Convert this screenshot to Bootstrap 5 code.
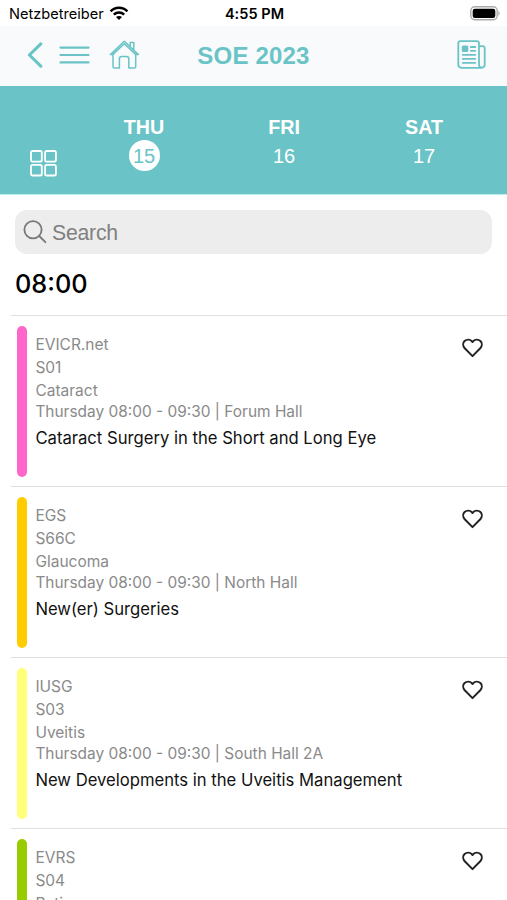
<!DOCTYPE html>
<html lang="en">
<head>
<meta charset="utf-8">
<meta name="viewport" content="width=device-width, initial-scale=1">
<title>SOE 2023</title>
<link href="https://cdn.jsdelivr.net/npm/bootstrap@5.3.0/dist/css/bootstrap.min.css" rel="stylesheet">
<style>
:root{--teal:#6ac4c7}
body{font-family:Inter,"Liberation Sans",sans-serif;color:#000;height:900px;overflow:hidden;background:#fff}
svg{display:block;flex:none}
.helv{font-family:"Liberation Sans",Arial,sans-serif}
.status{height:26px;font-size:14.6px;line-height:26px;padding:1px 7px 0 9px}
.status .side{flex:1 1 0}
.clock{font-weight:600;font-size:14.5px;letter-spacing:.05px}
.wifi{margin-left:5px}
.topbar{height:60px;background:#f8fafb;color:var(--teal);padding:0 21px 0 27px}
.topbar .side{flex:1 1 0;height:60px}
.topbar h1{font-size:24px;font-weight:700;line-height:60px;margin:0 6px 0 0;letter-spacing:.2px}
.icon-menu{margin-left:16px;margin-top:-2px}
.icon-back{margin-top:-2px}
.icon-home{margin-left:19px;margin-top:-3px}
.icon-news{margin-top:-3px}
.days{height:109px;background:var(--teal);color:#fff;border-bottom:1px solid #bdeaea;padding-right:13px}
.grid-btn{width:74px;padding:64px 0 0 30px}
.day{flex:1 1 0;padding-top:30px}
.day-name{font-size:19.7px;font-weight:700;line-height:23px}
.day-num{width:31px;height:31px;font-size:20px;line-height:32px;margin-top:1px}
.day-num.on{background:#fff;color:var(--teal);line-height:32px}
.search{margin:15px 15px 0;height:44px;border-radius:12px;background:#ededed;padding-left:8px;color:#808080;font-size:21.2px;line-height:44px}
.search-label{margin-left:5px;letter-spacing:-.2px;padding-top:1px}
.slot{font-size:25.3px;font-weight:500;line-height:30px;margin:0;padding:15px 15px 17px;height:61px}
.session{height:171px;margin-left:11px;border-top:1px solid #dfdfdf;padding:10px 24px 0 6px}
.track{width:10px;height:151px;border-radius:5px;flex:none}
.info{font-size:15.5px;line-height:23px;color:#8a8a8a;padding:6.5px 0 0 8.4px;white-space:nowrap}
.when{line-height:20px;font-size:15.45px}
.topic{font-size:16.65px;line-height:22px;margin:5px 0 0;color:#111;font-weight:400}
.fav{margin-top:12px}
.session:last-child{height:72px;overflow:hidden}
.pink{background:#ff66cc}.gold{background:#ffcc00}.lemon{background:#ffff7a}.lime{background:#99cc00}
</style>
<script src="https://cdn.jsdelivr.net/npm/bootstrap@5.3.0/dist/js/bootstrap.bundle.min.js"></script>
</head>
<body>
<svg width="0" height="0" class="position-absolute"><symbol id="heart" viewBox="0 0 20 19"><path d="M10 17.2 2.6 9.7C.7 7.6.7 4.6 2.5 2.9 4.5 1 7.6 1.1 9.3 3l.7.8.7-.8c1.7-1.9 4.8-2 6.8-.1 1.8 1.7 1.8 4.7-.1 6.8Z" fill="none" stroke="#222" stroke-width="1.9" stroke-linejoin="round"/></symbol></svg>

<div class="status d-flex align-items-center">
  <div class="side d-flex align-items-center"><span>Netzbetreiber</span>
    <svg class="wifi" width="20" height="15" viewBox="0 0 20 15" fill="none" stroke="#000" stroke-width="2.5"><path d="M1.6 5.3C6.3.6 13.7.6 18.4 5.3M4.8 8.7c2.9-2.8 7.5-2.8 10.4 0"/><path d="M10 14 7 11c1.7-1.5 4.3-1.5 6 0Z" fill="#000" stroke="none"/></svg>
  </div>
  <span class="clock">4:55 PM</span>
  <div class="side d-flex justify-content-end">
    <svg width="30" height="15" viewBox="0 0 30 15"><rect x=".8" y=".8" width="26.4" height="13" rx="4" fill="#fff" stroke="#aaa" stroke-width="1.4"/><rect x="2.7" y="2.7" width="22.6" height="9.2" rx="2.2"/><path d="M28.4 5v4.7c1.7-.8 1.7-3.9 0-4.7Z" fill="#aaa"/></svg>
  </div>
</div>

<nav class="topbar d-flex align-items-center">
  <div class="side d-flex align-items-center">
    <svg class="icon-back" width="16" height="26" viewBox="0 0 16 26" fill="none" stroke="currentColor" stroke-width="3.1" stroke-linecap="round" stroke-linejoin="round"><path d="M13.8 1.8 2.4 13l11.4 11.2"/></svg>
    <svg class="icon-menu" width="31" height="18" viewBox="0 0 31 18" stroke="currentColor" stroke-width="2.2" stroke-linecap="round"><path d="M1.5 1.6h28M1.5 9h28M1.5 16.4h28"/></svg>
    <svg class="icon-home" width="31" height="29" viewBox="0 0 31 29" fill="none" stroke="currentColor" stroke-width="1.5" stroke-linejoin="round" stroke-linecap="round"><path d="M4 14.8v11.9c0 .8.5 1.3 1.3 1.3h5.1v-9.2c0-1.5.8-2.3 2.3-2.3h4.8c1.5 0 2.3.8 2.3 2.3V28h5.6c.8 0 1.3-.5 1.3-1.3V14.8M1.4 14.6h2.4L15.3 3.7l11.6 10.9h2.5L15.3 1.2ZM21.2 6.2V2.6h3.6v7"/></svg>
  </div>
  <h1 class="helv">SOE 2023</h1>
  <div class="side d-flex align-items-center justify-content-end">
    <svg class="icon-news" width="29" height="29" viewBox="0 0 29 29" fill="none" stroke="currentColor" stroke-width="1.8" stroke-linecap="round" stroke-linejoin="round"><path d="M22 24.5V3.4Q22 1.2 19.8 1.2H3.5Q1.3 1.2 1.3 3.4v21.2q0 3.2 3.2 3.2h20q3.2 0 3.2-3.2V8.2q0-2-2-2H22M22 24.5q0 3.2 2.8 3.2"/><path d="M13.8 7h4.5M13.8 10.8h4.5M5.7 14.8h12.6M5.7 18.8h12.6M5.7 22.8h12.6"/><rect x="5.7" y="6.5" width="4.7" height="4.5" rx=".6" fill="currentColor"/></svg>
  </div>
</nav>

<div class="days helv d-flex">
  <div class="grid-btn"><svg width="27" height="27" viewBox="0 0 27 27" fill="none" stroke="#fff" stroke-width="1.8"><rect x="1" y="1" width="10.8" height="10.6" rx="1.6"/><rect x="15.1" y="1" width="10.8" height="10.6" rx="1.6"/><rect x="1" y="14.9" width="10.8" height="10.6" rx="1.6"/><rect x="15.1" y="14.9" width="10.8" height="10.6" rx="1.6"/></svg></div>
  <div class="day d-flex flex-column align-items-center"><div class="day-name">THU</div><div class="day-num on rounded-circle text-center">15</div></div>
  <div class="day d-flex flex-column align-items-center"><div class="day-name">FRI</div><div class="day-num text-center">16</div></div>
  <div class="day d-flex flex-column align-items-center"><div class="day-name">SAT</div><div class="day-num text-center">17</div></div>
</div>

<div class="search helv d-flex align-items-center">
  <svg width="24" height="24" viewBox="0 0 24 24" fill="none" stroke="#777" stroke-width="1.8" stroke-linecap="round"><circle cx="10" cy="9.8" r="8.6"/><path d="m16.2 16 6.2 6.2"/></svg>
  <span class="search-label">Search</span>
</div>

<h2 class="slot">08:00</h2>

<article class="session d-flex">
  <div class="track pink"></div>
  <div class="info flex-grow-1"><div>EVICR.net</div><div>S01</div><div>Cataract</div><div class="when">Thursday 08:00 - 09:30 | Forum Hall</div><h3 class="topic">Cataract Surgery in the Short and Long Eye</h3></div>
  <svg class="fav" width="21" height="20"><use href="#heart"/></svg>
</article>
<article class="session d-flex">
  <div class="track gold"></div>
  <div class="info flex-grow-1"><div>EGS</div><div>S66C</div><div>Glaucoma</div><div class="when">Thursday 08:00 - 09:30 | North Hall</div><h3 class="topic">New(er) Surgeries</h3></div>
  <svg class="fav" width="21" height="20"><use href="#heart"/></svg>
</article>
<article class="session d-flex">
  <div class="track lemon"></div>
  <div class="info flex-grow-1"><div>IUSG</div><div>S03</div><div>Uveitis</div><div class="when">Thursday 08:00 - 09:30 | South Hall 2A</div><h3 class="topic">New Developments in the Uveitis Management</h3></div>
  <svg class="fav" width="21" height="20"><use href="#heart"/></svg>
</article>
<article class="session d-flex">
  <div class="track lime"></div>
  <div class="info flex-grow-1"><div>EVRS</div><div>S04</div><div>Retina</div></div>
  <svg class="fav" width="21" height="20"><use href="#heart"/></svg>
</article>
</body>
</html>
